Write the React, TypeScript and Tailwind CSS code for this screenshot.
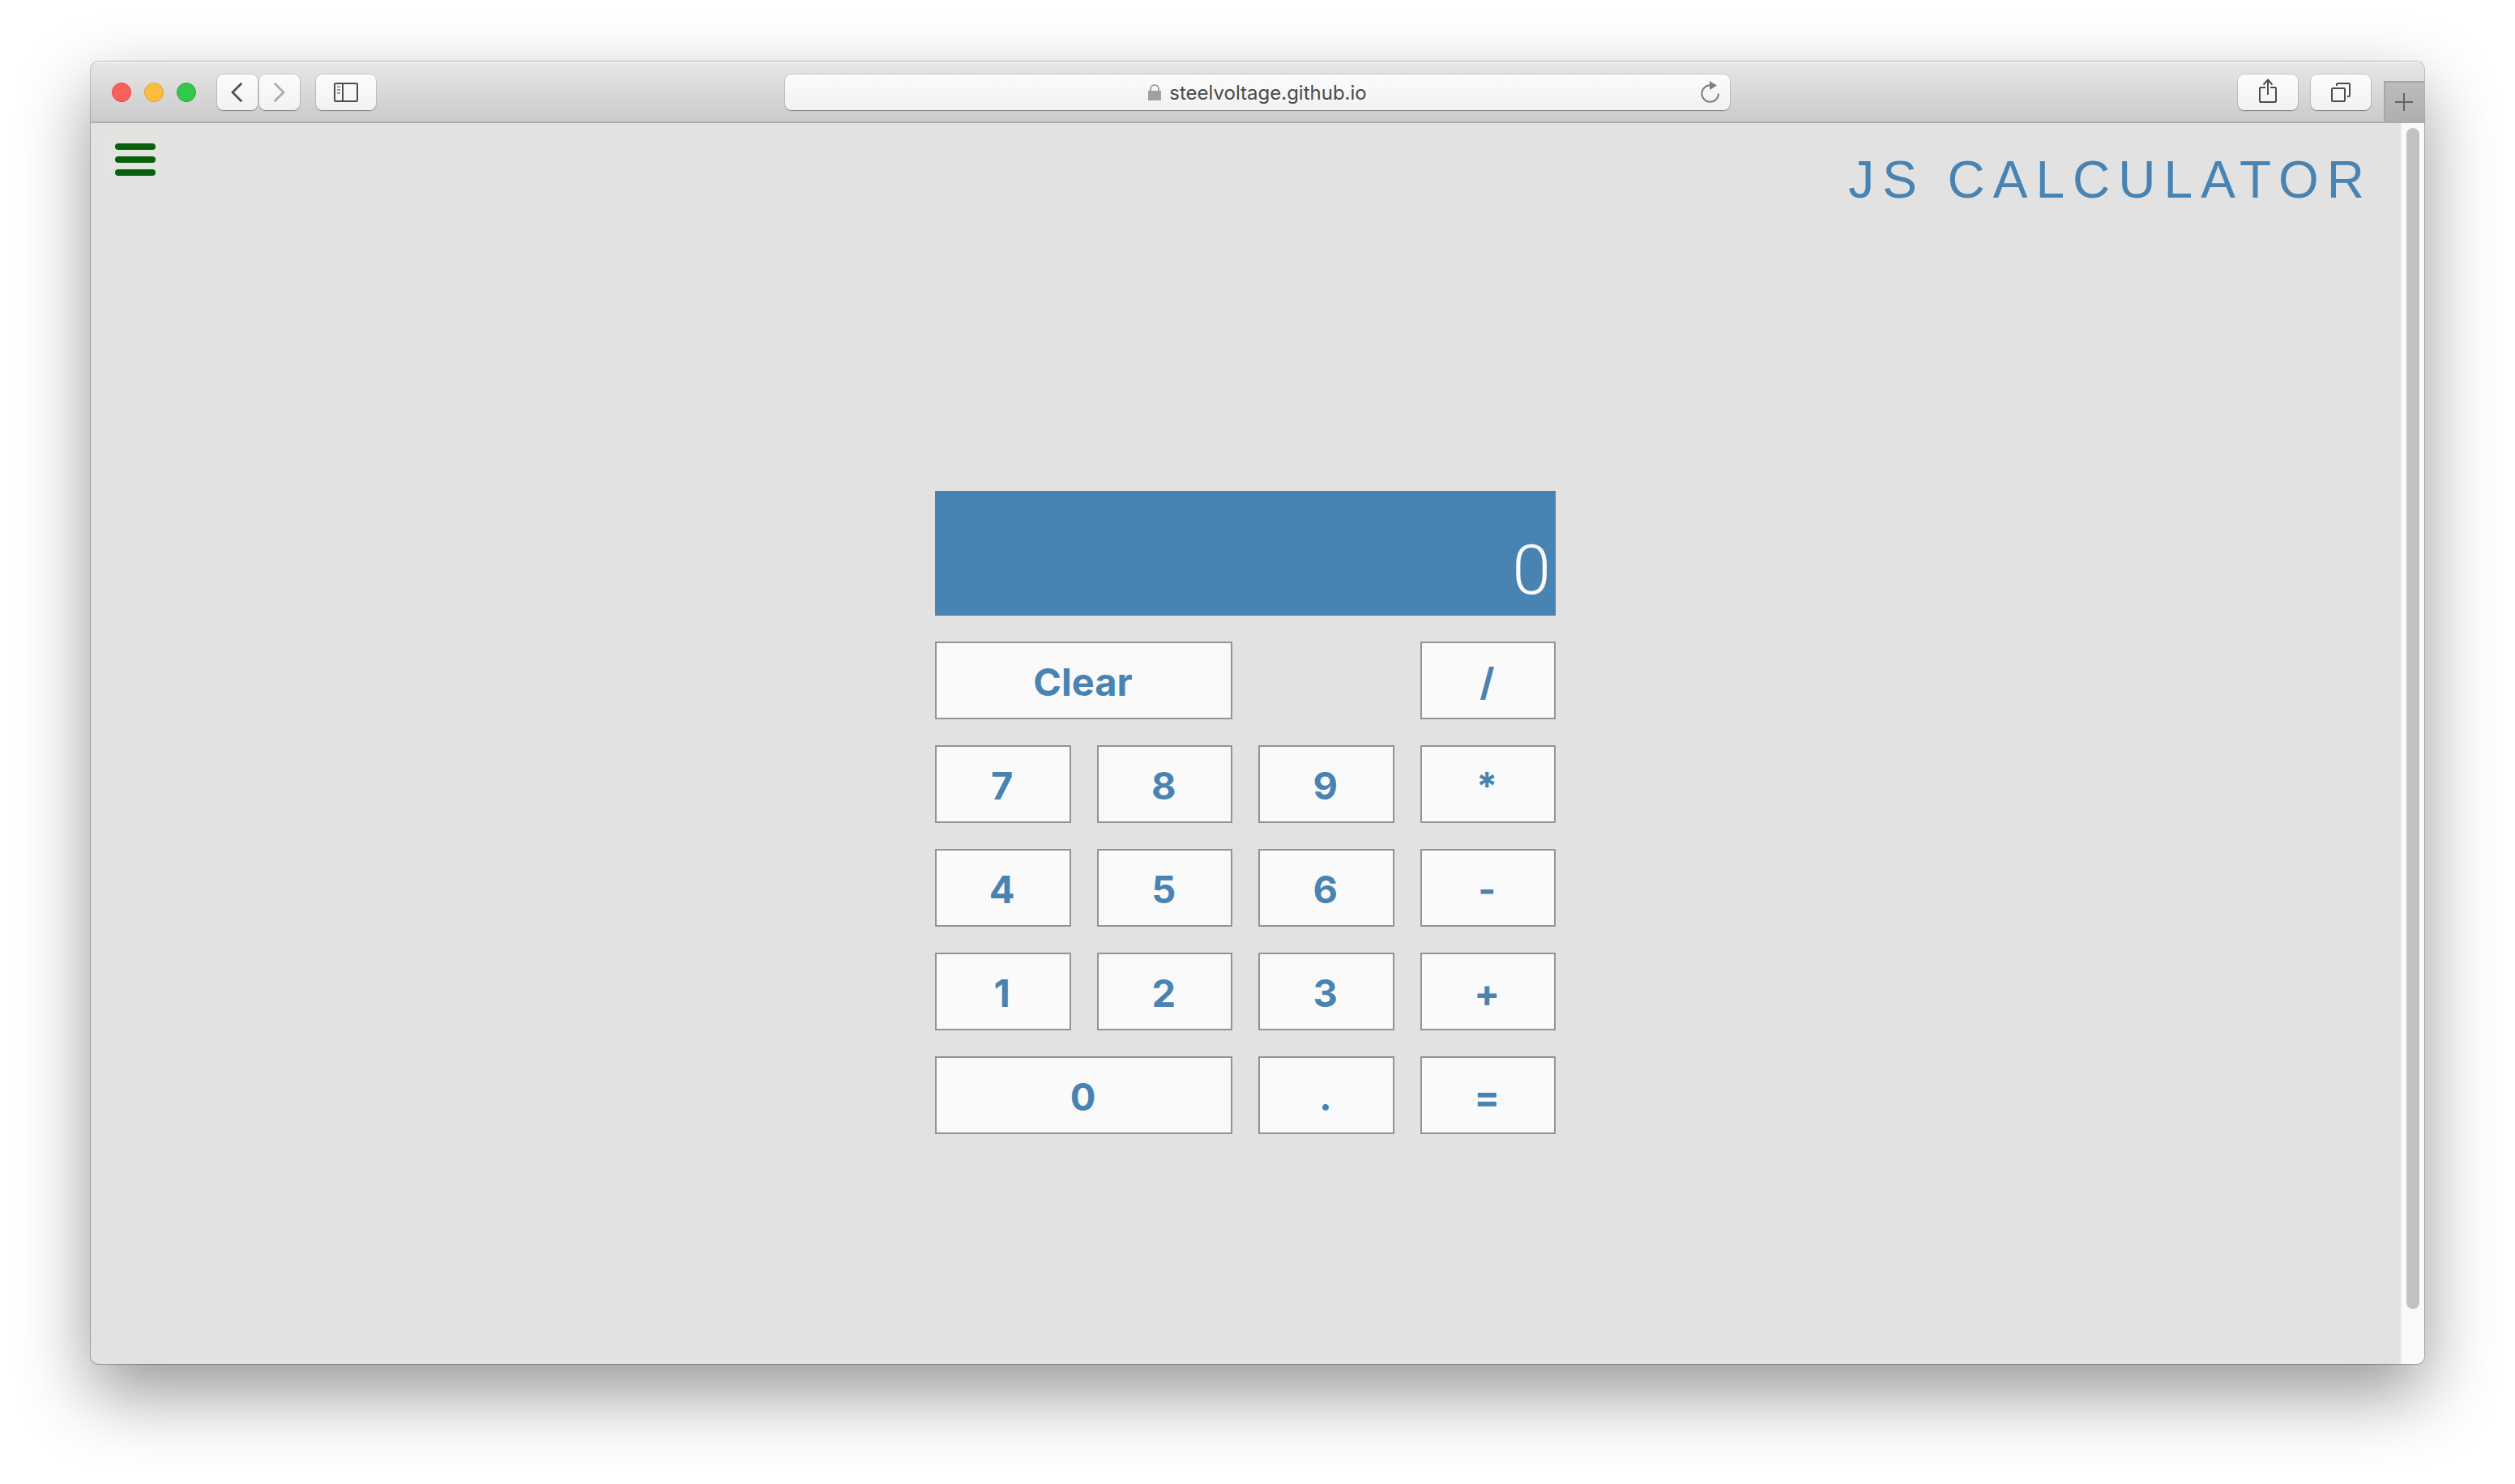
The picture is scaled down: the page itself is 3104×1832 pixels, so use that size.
import { useState } from "react";

type Key = { label: string; wide?: boolean };

const KEYS: Key[] = [
  { label: "Clear", wide: true },
  { label: "/" },
  { label: "7" },
  { label: "8" },
  { label: "9" },
  { label: "*" },
  { label: "4" },
  { label: "5" },
  { label: "6" },
  { label: "-" },
  { label: "1" },
  { label: "2" },
  { label: "3" },
  { label: "+" },
  { label: "0", wide: true },
  { label: "." },
  { label: "=" },
];

const TOOL_BUTTON =
  "flex h-11 items-center justify-center rounded-lg bg-linear-to-b from-[#fcfcfc] to-[#f2f2f2] text-[#4d4d4d] shadow-[0_0_0_1px_rgba(0,0,0,0.10),0_1px_1px_rgba(0,0,0,0.35)]";

function Chevron({ flip }: { flip?: boolean }) {
  return (
    <svg width="14" height="24" viewBox="0 0 14 24" fill="none" stroke="currentColor" strokeWidth="2.6" strokeLinecap="round" strokeLinejoin="miter" aria-hidden="true">
      <path d={flip ? "M1.5 1.5 12 12 1.5 22.5" : "M12.5 1.5 2 12 12.5 22.5"} />
    </svg>
  );
}

function SidebarIcon() {
  return (
    <svg width="30" height="24" viewBox="0 0 30 24" fill="none" stroke="currentColor" strokeWidth="2" aria-hidden="true">
      <rect x="1" y="1" width="28" height="22" rx="1" />
      <path d="M11 1v22" />
      <path d="M4 5h4M4 9h4M4 13h4" stroke="#9a9a9a" />
    </svg>
  );
}

function ShareIcon() {
  return (
    <svg width="22" height="30" viewBox="0 0 22 30" fill="none" stroke="currentColor" strokeWidth="2" className="-mt-1" aria-hidden="true">
      <path d="M8 11H2a1 1 0 0 0-1 1v16a1 1 0 0 0 1 1h18a1 1 0 0 0 1-1V12a1 1 0 0 0-1-1h-6" />
      <path d="M11 20V2M5.5 7.5 11 1.5l5.5 6" />
    </svg>
  );
}

function TabsIcon() {
  return (
    <svg width="24" height="24" viewBox="0 0 24 24" fill="none" stroke="currentColor" strokeWidth="2" aria-hidden="true">
      <rect x="1" y="7" width="16" height="16" rx="1" />
      <path d="M7 4V2a1 1 0 0 1 1-1h14a1 1 0 0 1 1 1v14a1 1 0 0 1-1 1h-2" />
    </svg>
  );
}

function ReloadIcon() {
  return (
    <svg width="24" height="28" viewBox="0 0 24 28" fill="none" aria-hidden="true">
      <path d="M22 15.5A10.3 10.3 0 1 1 11.7 5.2" stroke="#7f7f7f" strokeWidth="2" />
      <path d="M11 0v11l9-5.5z" fill="#7f7f7f" />
    </svg>
  );
}

function LockIcon() {
  return (
    <svg width="16" height="20" viewBox="0 0 16 20" fill="none" aria-hidden="true">
      <path d="M3 9V6a5 5 0 0 1 10 0v3" stroke="#a0a0a0" strokeWidth="2" />
      <path d="M0 8h16v12H0z" fill="#a0a0a0" />
    </svg>
  );
}

function Toolbar() {
  return (
    <header className="grid h-19 grid-cols-[1fr_2fr_1fr] items-center border-b-2 border-[#ababab] bg-linear-to-b from-[#e7e7e7] to-[#cbcbcb] pt-0.5 shadow-[inset_0_2px_0_#f3f3f3]">
      <div className="flex items-center pl-[26px]">
        <div className="flex gap-4">
          <button aria-label="Close" className="size-6 rounded-full border border-[#e2463f] bg-[#fc605c]" />
          <button aria-label="Minimize" className="size-6 rounded-full border border-[#e1a032] bg-[#fdbc40]" />
          <button aria-label="Zoom" className="size-6 rounded-full border border-[#24aa35] bg-[#34c84a]" />
        </div>
        <div className="ml-[26px] flex gap-0.5">
          <button aria-label="Back" className={`${TOOL_BUTTON} w-[50px] pr-0.5`}>
            <Chevron />
          </button>
          <button aria-label="Forward" className={`${TOOL_BUTTON} w-[50px]`}>
            <span className="text-[#aaaaaa]">
              <Chevron flip />
            </span>
          </button>
        </div>
        <button aria-label="Show sidebar" className={`${TOOL_BUTTON} ml-5 w-[74px]`}>
          <SidebarIcon />
        </button>
      </div>

      <div className="flex justify-center">
        <div className="relative flex h-11 w-full max-w-[1166px] items-center justify-center gap-2.5 rounded-lg bg-linear-to-b from-[#fcfcfc] to-[#f1f1f1] shadow-[0_0_0_1px_rgba(0,0,0,0.10),0_1px_1px_rgba(0,0,0,0.35)]">
          <LockIcon />
          <span className="pt-0.5 font-[Inter,sans-serif] text-[24px] leading-8 text-[#4a4a4a]">steelvoltage.github.io</span>
          <button aria-label="Reload" className="absolute right-3 flex">
            <ReloadIcon />
          </button>
        </div>
      </div>

      <div className="flex h-full items-center justify-end">
        <button aria-label="Share" className={`${TOOL_BUTTON} w-[74px]`}>
          <ShareIcon />
        </button>
        <button aria-label="Show all tabs" className={`${TOOL_BUTTON} ml-4 w-[74px]`}>
          <TabsIcon />
        </button>
        <button
          aria-label="New tab"
          className="ml-4 flex h-[50px] w-[50px] items-center justify-center self-end border-t-2 border-l-2 border-[#a6a6a6] bg-linear-to-b from-[#bcbcbc] to-[#afafaf] pr-0.5"
        >
          <svg width="22" height="22" viewBox="0 0 22 22" stroke="#636363" strokeWidth="2" aria-hidden="true">
            <path d="M11 0v22M0 11h22" />
          </svg>
        </button>
      </div>
    </header>
  );
}

function compute(expression: string): string {
  const parts = expression.match(/^(-?[\d.]+)([-+*/])(-?[\d.]+)$/);
  if (!parts) return expression;
  const a = Number(parts[1]);
  const b = Number(parts[3]);
  switch (parts[2]) {
    case "+":
      return String(a + b);
    case "-":
      return String(a - b);
    case "*":
      return String(a * b);
    default:
      return String(a / b);
  }
}

function Calculator() {
  const [value, setValue] = useState("0");

  function press(label: string) {
    if (label === "Clear") setValue("0");
    else if (label === "=") setValue(compute(value));
    else if (/[-+*/]/.test(label)) setValue(compute(value) + label);
    else setValue(value === "0" && label !== "." ? label : value + label);
  }

  return (
    <section aria-label="Calculator" className="grid w-full max-w-[766px] grid-cols-4 gap-8">
      <output className="col-span-4 flex h-[154px] items-end justify-end overflow-hidden bg-[#4983b2] px-1.5 pb-1 font-[Roboto,sans-serif] text-[86px] leading-[104px] font-light text-[#fafafa]">
        {value}
      </output>
      {KEYS.map(({ label, wide }) => (
        <button
          key={label}
          onClick={() => press(label)}
          className={`h-24 border-2 border-[#939393] bg-[#fafafa] pt-0.5 pr-0.5 font-[Inter,sans-serif] text-[47px] leading-none font-bold text-[#4983b2] ${
            wide ? "col-span-2" : ""
          } ${label === "/" ? "col-start-4" : ""}`}
        >
          {label}
        </button>
      ))}
    </section>
  );
}

export default function App() {
  return (
    <div className="flex min-h-screen flex-col bg-white px-28 pt-19 pb-37">
      <div className="flex flex-1 flex-col overflow-hidden rounded-[10px] bg-[#e2e2e2] shadow-[0_0_0_1px_rgba(0,0,0,0.22),0_36px_88px_rgba(0,0,0,0.41)]">
        <Toolbar />
        <div className="flex flex-1">
          <main className="flex flex-1 flex-col">
            <div className="flex h-[170px] items-start justify-between pt-3.5 pl-4">
              <button aria-label="Menu" className="flex h-15 w-[78px] flex-col justify-center gap-2 bg-[#e3e4df] px-3.5 pt-0.5">
                <span className="h-2 w-full rounded-full bg-[#09610c]" />
                <span className="h-2 w-full rounded-full bg-[#09610c]" />
                <span className="h-2 w-full rounded-full bg-[#09610c]" />
              </button>
              <h1 className="pt-5 pr-[34px] font-['Liberation_Sans',sans-serif] text-[64px] leading-[72px] tracking-[10px] text-[#4983b2]">
                JS CALCULATOR
              </h1>
            </div>
            <div className="flex flex-1 items-center justify-center">
              <Calculator />
            </div>
          </main>
          <div className="flex w-[30px] flex-col items-center border-l-2 border-[#e8e8e8] bg-[#fafafa] pt-1.5 pb-[68px]">
            <div className="w-4 flex-1 rounded-full bg-[#c1c1c1]" />
          </div>
        </div>
      </div>
    </div>
  );
}
